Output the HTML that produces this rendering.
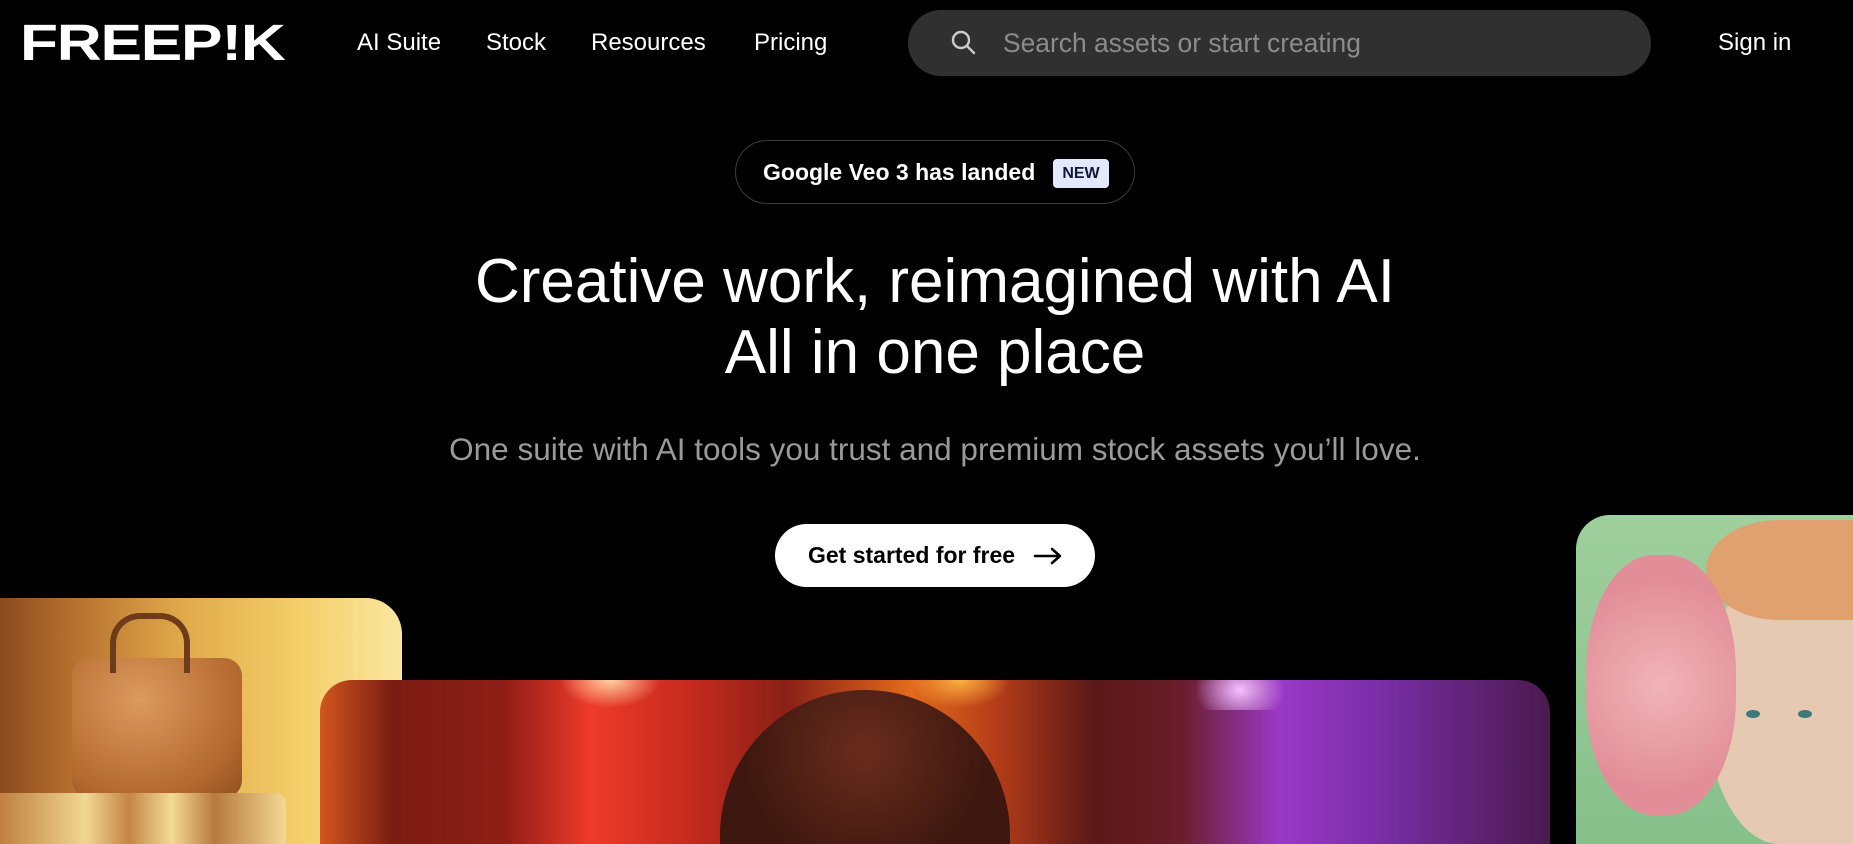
<!DOCTYPE html>
<html style="overflow:hidden;height:844px"><head><meta charset="utf-8"><style>
*{margin:0;padding:0;box-sizing:border-box}
body{width:1853px;height:844px;background:#000;overflow:hidden;position:relative;font-family:"Liberation Sans",sans-serif;color:#fff}
.abs{position:absolute}
.logo{left:20px;top:20px;font-size:51px;font-weight:900;letter-spacing:-1px;line-height:46px;transform:scaleX(1.22);transform-origin:left}
.nav{top:29px;font-size:24px;line-height:28px}
.search{left:908px;top:10px;width:743px;height:66px;border-radius:33px;background:#303030}
.search span{position:absolute;left:95px;top:18px;font-size:26.4px;color:#8c8c8c}
.pill{left:735px;top:140px;width:400px;height:64px;border:1px solid #3a3a3a;border-radius:32px}
.pill b{position:absolute;left:27px;top:18px;font-size:23px}
.new{position:absolute;left:317px;top:18px;width:56px;height:29px;background:#e3e9fb;color:#111a3a;border-radius:4px;font-size:16px;font-weight:700;text-align:center;line-height:29px}
h1{position:absolute;left:0;width:1870px;text-align:center;font-weight:400;font-size:62px;line-height:71px;top:246px}
.sub{left:0;width:1870px;text-align:center;top:431px;font-size:31.5px;color:#9a9a9a}
.btn{left:775px;top:524px;width:320px;height:63px;background:#fff;border-radius:32px;color:#000;font-weight:700;font-size:23px;line-height:63px;padding-left:33px}
.clip{overflow:hidden}
</style></head><body>
<div class="abs logo">FREEP!K</div>
<div class="abs nav" style="left:357px">AI Suite</div>
<div class="abs nav" style="left:486px">Stock</div>
<div class="abs nav" style="left:591px">Resources</div>
<div class="abs nav" style="left:754px">Pricing</div>
<div class="abs search">
<svg style="position:absolute;left:42px;top:19px" width="28" height="28" viewBox="0 0 28 28"><circle cx="11" cy="11" r="8" fill="none" stroke="#ccc" stroke-width="2.4"/><path d="M17 17l7 7" stroke="#ccc" stroke-width="2.4" stroke-linecap="round"/></svg>
<span>Search assets or start creating</span></div>
<div class="abs nav" style="left:1718px">Sign in</div>
<div class="abs pill"><b>Google Veo 3 has landed</b><div class="new">NEW</div></div>
<h1>Creative work, reimagined with AI<br>All in one place</h1>
<div class="abs sub">One suite with AI tools you trust and premium stock assets you’ll love.</div>
<div class="abs btn">Get started for free
<svg style="position:absolute;left:258px;top:22px" width="30" height="20" viewBox="0 0 30 20"><path d="M2 10h25M19 3l8 7-8 7" fill="none" stroke="#000" stroke-width="2.5" stroke-linecap="round" stroke-linejoin="round"/></svg></div>

<div class="abs clip" style="left:0;top:598px;width:402px;height:246px;border-top-right-radius:36px;background:linear-gradient(90deg,#8a4a1e 0%,#b06a2c 15%,#e0a84a 45%,#f4cf6a 75%,#fbe7a0 100%)">
<div class="abs" style="left:72px;top:60px;width:170px;height:140px;border-radius:18px;background:radial-gradient(ellipse at 40% 30%,#dc9a5e,#b4692e 70%,#8e4e20)"></div>
<div class="abs" style="left:110px;top:15px;width:80px;height:60px;border:6px solid #6e3c18;border-bottom:none;border-radius:30px 30px 0 0"></div>
<div class="abs" style="left:0;top:195px;width:286px;height:51px;background:linear-gradient(90deg,#c08040,#f2d792 30%,#c58446 45%,#f4da95 60%,#b87a3e 75%,#f3d895);border-top-right-radius:10px"></div>
</div>

<div class="abs clip" style="left:320px;top:680px;width:1230px;height:164px;border-radius:32px 32px 0 0;background:linear-gradient(90deg,#d2561e 0%,#7a1c12 6%,#8e1e16 15%,#ef3a2a 22%,#c62a1e 30%,#8a2016 38%,#e36a1c 48%,#b43c18 55%,#5a1818 63%,#6a1e2a 70%,#9a38c6 78%,#7a2ea8 86%,#4a1a4e 100%)">
<div class="abs" style="left:0;top:0;width:1230px;height:30px;background:radial-gradient(ellipse 50px 28px at 290px 0,#ffd0a0,transparent),radial-gradient(ellipse 50px 28px at 640px 0,#ffb040,transparent),radial-gradient(ellipse 45px 35px at 920px 10px,#f4c0ff,transparent)"></div>
<div class="abs" style="left:400px;top:10px;width:290px;height:154px;border-radius:145px 145px 0 0;background:radial-gradient(circle at 50% 40%,#6a2c1c,#3e1810 70%)"></div>
</div>

<div class="abs clip" style="left:1576px;top:515px;width:277px;height:329px;border-top-left-radius:34px;background:linear-gradient(180deg,#9fcf9c,#86c08a)">
<div class="abs" style="left:130px;top:50px;width:147px;height:279px;border-radius:50% 0 0 50%;background:#e6c9b2"></div>
<div class="abs" style="left:130px;top:5px;width:147px;height:100px;border-radius:50% 0 0 50%;background:#e0a070"></div>
<div class="abs" style="left:10px;top:40px;width:150px;height:260px;border-radius:45%;background:radial-gradient(circle,#f0b4b8,#e28e98 70%)"></div>
<div class="abs" style="left:170px;top:195px;width:14px;height:8px;border-radius:50%;background:#3a7a7a"></div>
<div class="abs" style="left:222px;top:195px;width:14px;height:8px;border-radius:50%;background:#3a7a7a"></div>
</div>
</body></html>
